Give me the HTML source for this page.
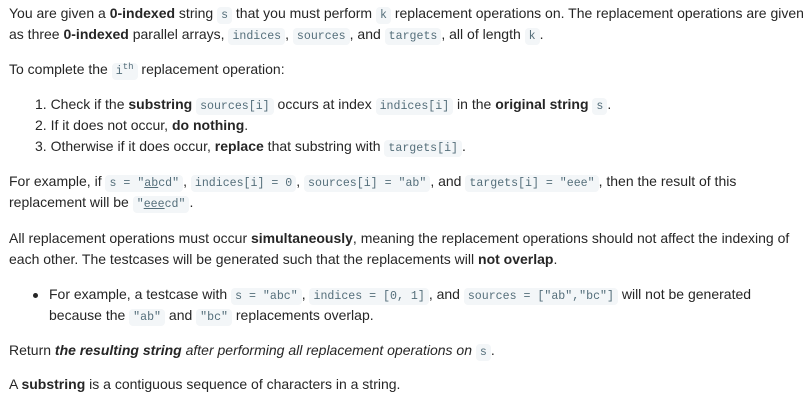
<!DOCTYPE html>
<html><head><meta charset="utf-8"><style>
body{margin:0;background:#fff;font-family:"Liberation Sans",sans-serif;font-size:14px;color:#262626;}
.l{position:absolute;white-space:nowrap;line-height:21px;height:21px;}
code{font-family:"Liberation Mono",monospace;font-size:11.6px;color:#546e7a;background:#f3f6f8;border-radius:4px;padding:2px 4px;}
b{font-weight:bold;color:#262626}
u{text-decoration:underline}
sup{font-size:9px;line-height:0}
</style></head><body>
<div class="l" style="left:9px;top:3px">You are given a <b>0-indexed</b> string <code>s</code> that you must perform <code>k</code> replacement operations on. The replacement operations are given</div>
<div class="l" style="left:9px;top:24px">as three <b>0-indexed</b> parallel arrays, <code>indices</code>, <code>sources</code>, and <code>targets</code>, all of length <code>k</code>.</div>
<div class="l" style="left:9px;top:59px">To complete the <code>i<sup>th</sup></code> replacement operation:</div>
<div class="l" style="left:35px;top:94px">1. Check if the <b>substring</b> <code>sources[i]</code> occurs at index <code>indices[i]</code> in the <b>original string</b> <code>s</code>.</div>
<div class="l" style="left:35px;top:115px">2. If it does not occur, <b>do nothing</b>.</div>
<div class="l" style="left:35px;top:136px">3. Otherwise if it does occur, <b>replace</b> that substring with <code>targets[i]</code>.</div>
<div class="l" style="left:9px;top:171px">For example, if <code>s = "<u>ab</u>cd"</code>, <code>indices[i] = 0</code>, <code>sources[i] = "ab"</code>, and <code>targets[i] = "eee"</code>, then the result of this</div>
<div class="l" style="left:9px;top:192px">replacement will be <code>"<u>eee</u>cd"</code>.</div>
<div class="l" style="left:9px;top:228px">All replacement operations must occur <b>simultaneously</b>, meaning the replacement operations should not affect the indexing of</div>
<div class="l" style="left:9px;top:249px">each other. The testcases will be generated such that the replacements will <b>not overlap</b>.</div>
<div class="l" style="left:33px;top:284px"><span style="display:inline-block;width:5px;height:5px;border-radius:50%;background:#262626;vertical-align:middle;margin-right:11px"></span>For example, a testcase with <code>s = "abc"</code>, <code>indices = [0, 1]</code>, and <code>sources = ["ab","bc"]</code> will not be generated</div>
<div class="l" style="left:49px;top:305px">because the <code>"ab"</code> and <code>"bc"</code> replacements overlap.</div>
<div class="l" style="left:9px;top:340px">Return <b><i>the resulting string</i></b> <i>after performing all replacement operations on</i> <code>s</code>.</div>
<div class="l" style="left:9px;top:374px">A <b>substring</b> is a contiguous sequence of characters in a string.</div>
</body></html>
